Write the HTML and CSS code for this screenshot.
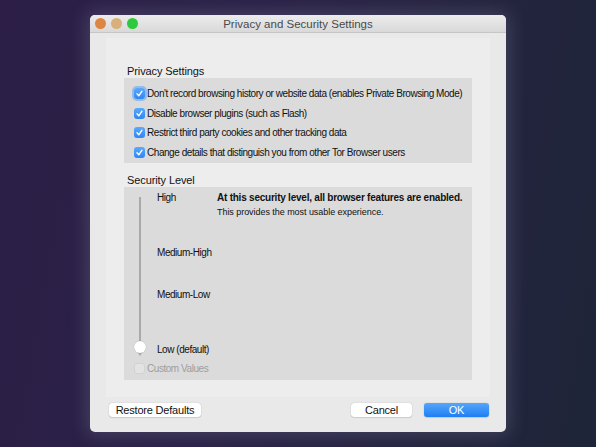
FILE: index.html
```html
<!DOCTYPE html>
<html>

<head>
    <title>Privacy and Security Settings</title>
    <link rel="stylesheet" href="styles.css">
</head>

<body>
    <div class="window">
        <div class="titlebar">
            <div class="lights">
                <span class="light close"></span>
                <span class="light min"></span>
                <span class="light max"></span>
            </div>
            <div class="title">Privacy and Security Settings</div>
        </div>

        <div class="panel">
            <h2 class="heading">Privacy Settings</h2>
            <div class="box privacy">
                <div class="row">
                    <span class="check on focus"><svg viewBox="0 0 11 11"><path d="M3 5.8 L4.8 7.8 L8 3.2" /></svg></span>
                    <span>Don't record browsing history or website data (enables Private Browsing Mode)</span>
                </div>
                <div class="row">
                    <span class="check on"><svg viewBox="0 0 11 11"><path d="M3 5.8 L4.8 7.8 L8 3.2" /></svg></span>
                    <span>Disable browser plugins (such as Flash)</span>
                </div>
                <div class="row">
                    <span class="check on"><svg viewBox="0 0 11 11"><path d="M3 5.8 L4.8 7.8 L8 3.2" /></svg></span>
                    <span>Restrict third party cookies and other tracking data</span>
                </div>
                <div class="row">
                    <span class="check on"><svg viewBox="0 0 11 11"><path d="M3 5.8 L4.8 7.8 L8 3.2" /></svg></span>
                    <span>Change details that distinguish you from other Tor Browser users</span>
                </div>
            </div>

            <h2 class="heading second">Security Level</h2>
            <div class="box security">
                <div class="level-row">
                    <div class="slider">
                        <div class="track"></div>
                        <div class="knob"></div>
                        <div class="pointer"></div>
                    </div>
                    <div class="levels">
                        <div class="level">High</div>
                        <div class="level mh">Medium-High</div>
                        <div class="level ml">Medium-Low</div>
                        <div class="level low">Low (default)</div>
                    </div>
                    <div class="desc">
                        <div class="desc-title">At this security level, all browser features are enabled.</div>
                        <div class="desc-sub">This provides the most usable experience.</div>
                    </div>
                </div>
                <div class="row custom">
                    <span class="check off"></span>
                    <span>Custom Values</span>
                </div>
            </div>
        </div>

        <div class="footer">
            <button class="btn">Restore Defaults</button>
            <div class="spacer"></div>
            <button class="btn cancel">Cancel</button>
            <button class="btn ok">OK</button>
        </div>
    </div>
</body>

</html>
```

FILE: styles.css
```css
body {
    margin: 0;
    width: 596px;
    height: 447px;
    overflow: hidden;
    padding: 15px 0 0 90px;
    box-sizing: border-box;
    background: linear-gradient(100deg, #2c1e47 0%, #292245 45%, #1e2538 100%);
    font-family: "Liberation Sans", Arial, sans-serif;
    color: #111111;
}

.window {
    width: 416px;
    height: 417px;
    background-color: #e9e9e9;
    border-radius: 5px;
    overflow: hidden;
    box-shadow: 0 0 18px 4px rgba(170, 175, 200, 0.22);
}

/* title bar with the traffic lights */
.titlebar {
    height: 18px;
    position: relative;
    background: linear-gradient(#ececec, #d9d9d9);
    border-bottom: 1px solid #c6c6c6;
    box-sizing: border-box;
}

.lights {
    position: absolute;
    left: 5px;
    top: 3px;
    display: flex;
    gap: 5px;
}

.light {
    width: 11px;
    height: 11px;
    border-radius: 50%;
}

.close {
    background-color: #dd8643;
}

.min {
    background-color: #d8b07c;
}

.max {
    background-color: #2fc83f;
}

.title {
    text-align: center;
    font-size: 11.5px;
    line-height: 18px;
    color: #4a4a4a;
}

.panel {
    margin: 5px 16px 0;
    height: 359px;
    padding: 26px 18px 0;
    box-sizing: border-box;
    background-color: #ededed;
}

.heading {
    margin: 0 0 0 3px;
    font-size: 11px;
    font-weight: normal;
    line-height: 14px;
    letter-spacing: -0.1px;
}

.heading.second {
    margin-top: 10px;
}

.box {
    background-color: #dbdbdb;
    font-size: 10px;
    letter-spacing: -0.45px;
}

.privacy {
    height: 85px;
    padding: 6px 0 0 10px;
    box-sizing: border-box;
}

.row {
    display: flex;
    align-items: center;
    gap: 2px;
    height: 19.5px;
    white-space: nowrap;
}

.check {
    width: 11px;
    height: 11px;
    border-radius: 3px;
    box-sizing: border-box;
    flex-shrink: 0;
}

.check svg {
    display: block;
    width: 11px;
    height: 11px;
}

.check path {
    fill: none;
    stroke: #ffffff;
    stroke-width: 1.4;
    stroke-linecap: round;
    stroke-linejoin: round;
}

.check.on {
    background: linear-gradient(#5aa9fc, #2d86f3);
}

.check.focus {
    box-shadow: 0 0 0 2px rgba(90, 160, 245, 0.55);
}

.check.off {
    background-color: #e3e3e3;
    border: 1px solid #d2d2d2;
}

/* security level slider */
.security {
    height: 193px;
    padding-left: 10px;
    box-sizing: border-box;
}

.level-row {
    display: flex;
    height: 170px;
}

.slider {
    width: 12px;
    display: flex;
    flex-direction: column;
    align-items: center;
    padding-top: 10px;
}

.track {
    width: 2px;
    height: 146px;
    background-color: #a9a9a9;
}

.knob {
    width: 12px;
    height: 12px;
    margin-top: -2px;
    border-radius: 50%;
    background-color: #ffffff;
    box-shadow: 0 0 1px rgba(0, 0, 0, 0.35);
}

.pointer {
    width: 0;
    height: 0;
    border-left: 2px solid transparent;
    border-right: 2px solid transparent;
    border-top: 3px solid #a9a9a9;
}

.levels {
    width: 60px;
    margin-left: 11px;
    padding-top: 5px;
}

.level {
    line-height: 12px;
    white-space: nowrap;
}

.level.mh {
    margin-top: 43px;
}

.level.ml {
    margin-top: 30px;
}

.level.low {
    margin-top: 43px;
}

.desc {
    padding-top: 5px;
    white-space: nowrap;
}

.desc-title {
    font-weight: bold;
    line-height: 12px;
    letter-spacing: -0.23px;
}

.desc-sub {
    font-size: 9px;
    line-height: 12px;
    margin-top: 2px;
    letter-spacing: -0.05px;
}

.custom {
    height: 12px;
    margin-top: 5px;
    color: #9e9e9e;
}

.footer {
    display: flex;
    align-items: center;
    padding: 6px 17px 0 19px;
}

.spacer {
    flex: 1;
}

.btn {
    height: 14px;
    padding: 0;
    border: none;
    border-radius: 3px;
    background-color: #ffffff;
    box-shadow: 0 0 1px rgba(0, 0, 0, 0.35), 0 1px 1px rgba(0, 0, 0, 0.1);
    font-family: "Liberation Sans", Arial, sans-serif;
    font-size: 11px;
    line-height: 14px;
    letter-spacing: -0.2px;
    color: #111111;
    width: 92px;
}

.btn.cancel {
    width: 61px;
    margin-right: 12px;
}

.btn.ok {
    width: 65px;
    color: #ffffff;
    background: linear-gradient(#56a6fb, #1e7ff3);
}
```
